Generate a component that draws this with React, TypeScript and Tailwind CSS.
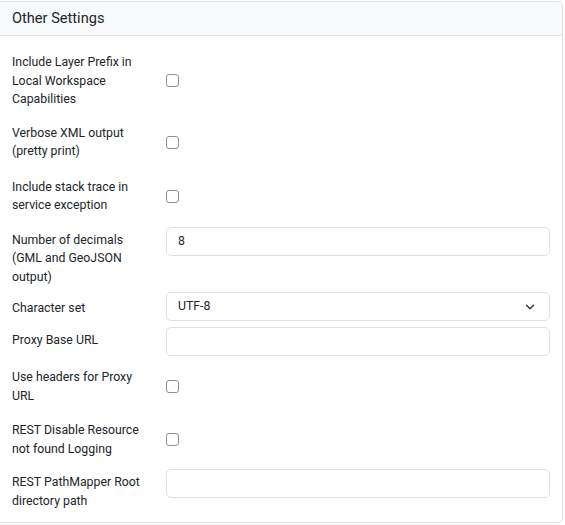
import { ChevronDown } from 'lucide-react';

type Row =
  | { kind: 'check'; label: string; mt: string }
  | { kind: 'input'; label: string; mt: string; value?: string }
  | { kind: 'select'; label: string; mt: string; value: string };

const ROWS: Row[] = [
  { kind: 'check', label: 'Include Layer Prefix in Local Workspace Capabilities', mt: 'mt-0' },
  { kind: 'check', label: 'Verbose XML output (pretty print)', mt: 'mt-[11px]' },
  { kind: 'check', label: 'Include stack trace in service exception', mt: 'mt-[13px]' },
  { kind: 'input', label: 'Number of decimals (GML and GeoJSON output)', mt: 'mt-[12px]', value: '8' },
  { kind: 'select', label: 'Character set', mt: 'mt-[6px]', value: 'UTF-8' },
  { kind: 'input', label: 'Proxy Base URL', mt: 'mt-[6px]' },
  { kind: 'check', label: 'Use headers for Proxy URL', mt: 'mt-[8px]' },
  { kind: 'check', label: 'REST Disable Resource not found Logging', mt: 'mt-[12px]' },
  { kind: 'input', label: 'REST PathMapper Root directory path', mt: 'mt-[11px]' },
];

function Checkbox() {
  return (
    <span className="block mt-[4px] w-[13px] h-[13px] rounded-[3px] border border-[#8b9097] bg-white" />
  );
}

function FieldRow({ row }: { row: Row }) {
  const centered = row.kind !== 'input';
  return (
    <div className={`flex ${centered ? 'items-center' : 'items-start'} ${row.mt}`}>
      <label className="w-[154px] shrink-0 pt-[4px] pr-[24px] text-[12.3px] leading-[18.5px] text-[#212529]">
        {row.label}
      </label>
      <div className="flex-1">
        {row.kind === 'check' && <Checkbox />}
        {row.kind === 'input' && (
          <div className="h-[29px] rounded-[5px] border border-[#dee2e6] bg-white px-[11px] flex items-center text-[12.3px] text-[#212529]">
            {row.value}
          </div>
        )}
        {row.kind === 'select' && (
          <div className="h-[29px] rounded-[5px] border border-[#dee2e6] bg-white pl-[11px] pr-[12px] flex items-center justify-between text-[12.3px] text-[#212529]">
            <span>{row.value}</span>
            <ChevronDown size={14} strokeWidth={2.5} className="text-[#343a40]" />
          </div>
        )}
      </div>
    </div>
  );
}

export default function App() {
  return (
    <div className="w-[565px] h-[525px] bg-white font-['Roboto',sans-serif] pt-px">
      <div className="-ml-[4px] w-[567px] rounded-[5px] border border-[#dee2e6] overflow-hidden">
        {/* Header */}
        <div className="h-[34px] bg-[#f8f9fa] border-b border-[#dee2e6] flex items-center pl-[15px] pt-px text-[14.6px] text-[#212529]">
          Other Settings
        </div>
        {/* Body */}
        <div className="pl-[15px] pr-[12px] pt-[13px] pb-[12px]">
          {ROWS.map((row) => (
            <FieldRow key={row.label} row={row} />
          ))}
        </div>
      </div>
    </div>
  );
}
